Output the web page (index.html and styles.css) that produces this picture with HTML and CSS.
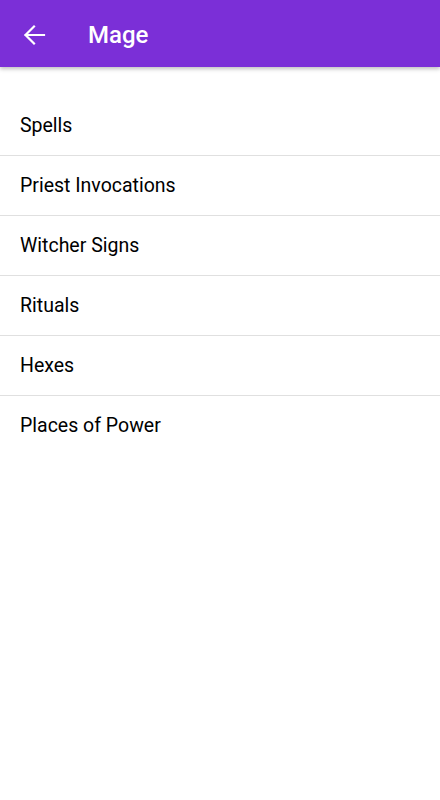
FILE: index.html
```html
<!DOCTYPE html>
<html lang="en">
<head>
    <meta charset="UTF-8">
    <meta name="viewport" content="width=device-width, initial-scale=1.0">
    <title>Mage</title>
    <link rel="stylesheet" href="styles.css">
</head>
<body>
    <header class="appbar">
        <button class="back" aria-label="Back">
            <svg width="30" height="30" viewBox="0 0 30 30">
                <path d="M25 15H6.5M15 6.5L6.5 15 15 23.5" fill="none" stroke="#fff" stroke-width="2.2" stroke-linecap="square"/>
            </svg>
        </button>
        <h1>Mage</h1>
    </header>
    <ul class="lista">
        <li>Spells</li>
        <li>Priest Invocations</li>
        <li>Witcher Signs</li>
        <li>Rituals</li>
        <li>Hexes</li>
        <li>Places of Power</li>
    </ul>
</body>
</html>
```
FILE: styles.css
```css
body {
    font-family: Roboto, "Liberation Sans", sans-serif;
    background-color: #ffffff;
    color: #000;
    margin: 0;
    padding: 0;
}
.appbar {
    height: 67px;
    background-color: #7b2fd7;
    display: flex;
    align-items: center;
    box-shadow: 0 2px 4px rgba(0, 0, 0, 0.25);
    position: relative;
}
.back {
    background: none;
    border: 0;
    padding: 0;
    margin: 3px 0 0 19px;
    width: 30px;
    height: 30px;
    display: flex;
    cursor: pointer;
}
.appbar h1 {
    margin: 2px 0 0 39px;
    color: #fff;
    font-size: 24px;
    font-weight: 500;
}
.lista {
    list-style: none;
    margin: 0;
    padding: 29px 0 0;
}
.lista li {
    height: 59px;
    line-height: 59px;
    padding-left: 20px;
    font-size: 19.5px;
    border-bottom: 1px solid #e0e0e0;
}
.lista li:last-child {
    border-bottom: 0;
}
```
